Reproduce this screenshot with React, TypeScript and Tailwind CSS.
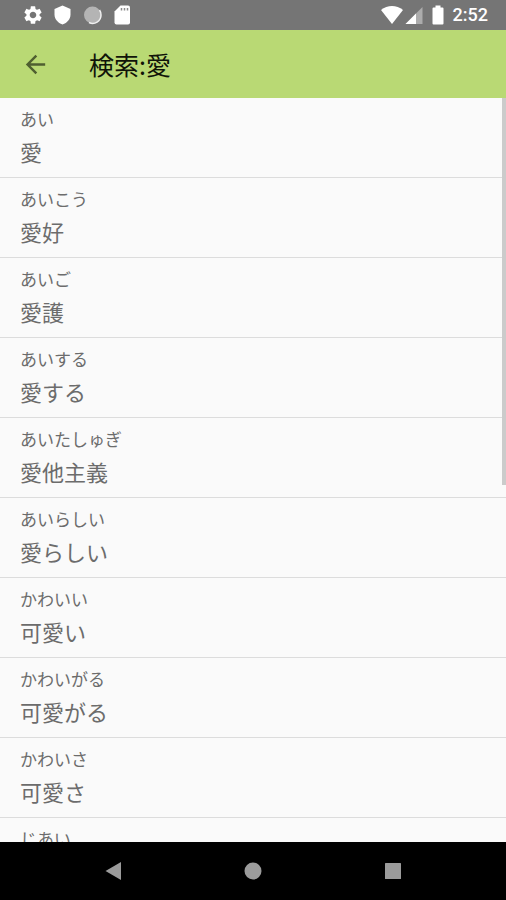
import { MdArrowBack, MdSettings } from "react-icons/md";

interface Word {
  reading: string;
  text: string;
}

const words: Word[] = [
  { reading: "あい", text: "愛" },
  { reading: "あいこう", text: "愛好" },
  { reading: "あいご", text: "愛護" },
  { reading: "あいする", text: "愛する" },
  { reading: "あいたしゅぎ", text: "愛他主義" },
  { reading: "あいらしい", text: "愛らしい" },
  { reading: "かわいい", text: "可愛い" },
  { reading: "かわいがる", text: "可愛がる" },
  { reading: "かわいさ", text: "可愛さ" },
  { reading: "じあい", text: "慈愛" },
];

function StatusBar() {
  return (
    <div className="flex h-[30px] shrink-0 items-center justify-between bg-[#757575] pl-[22px] pr-[18px] text-white">
      <div className="flex items-center gap-2">
        <MdSettings className="size-[22px]" />
        <svg className="size-[22px]" viewBox="0 0 22 22" fill="currentColor">
          <path d="M10.500 1.500 18.500 5v5.500c0 4.400-3.200 8.500-8 10-4.800-1.500-8-5.600-8-10V5z" />
        </svg>
        <svg className="size-[22px]" viewBox="0 0 22 22">
          <circle cx="10.500" cy="11" r="8.500" fill="#b4b4b4" />
          <path
            d="M17.500 6A8.300 8.300 0 0 1 19 11 8.300 8.300 0 0 1 7 18.500"
            fill="none"
            stroke="#f0f0f0"
            strokeWidth="1.500"
          />
        </svg>
        <svg className="size-[22px]" viewBox="0 0 22 22" fill="currentColor">
          <path d="M8.500 1.500H16q2 0 2 2V18.500q0 2-2 2H4.500q-2 0-2-2V7.500z" />
          <path
            d="M9.500 4v2.500M12.500 4v2.500M15.500 4v2.500"
            fill="none"
            stroke="#8c8c8c"
            strokeWidth="1.500"
          />
        </svg>
      </div>
      <div className="flex items-center">
        <svg className="h-[22px] w-6" viewBox="0 0 24 22" fill="currentColor">
          <path d="M1 6C7.500.8 16.500.8 23 6L12 20z" />
        </svg>
        <svg className="h-[22px] w-5" viewBox="0 0 20 22" fill="currentColor">
          <path d="M18.500 3v17h-17z" opacity="0.4" />
          <path d="M12 9.500V20H1.500z" />
        </svg>
        <svg
          className="ml-1 h-[22px] w-[20px]"
          viewBox="0 0 20 22"
          fill="currentColor"
        >
          <path d="M7.500 1.500h5v2H14.500q1 0 1 1v15q0 1-1 1h-9q-1 0-1-1v-15q0-1 1-1h2z" />
        </svg>
        <span className="ml-[5px] font-[Roboto,sans-serif] text-[18px] font-medium leading-[22px]">
          2:52
        </span>
      </div>
    </div>
  );
}

function WordRow({ word }: { word: Word }) {
  return (
    <li className="flex h-20 shrink-0 flex-col border-b border-[#dcdcdc] px-5 pt-[9px] text-[#6c6c6c]">
      <span className="text-[17px] leading-6">{word.reading}</span>
      <span className="mt-1 text-[22px] leading-8">{word.text}</span>
    </li>
  );
}

function NavigationBar() {
  return (
    <nav className="grid h-[58px] shrink-0 grid-cols-3 bg-black px-[43px] text-[#9b9b9b]">
      <button aria-label="Back" className="flex items-center justify-center">
        <svg className="size-5" viewBox="0 0 20 20" fill="currentColor">
          <path d="M18 1v18L2.500 10z" />
        </svg>
      </button>
      <button aria-label="Home" className="flex items-center justify-center">
        <svg className="size-5" viewBox="0 0 20 20" fill="currentColor">
          <circle cx="10" cy="10" r="8.500" />
        </svg>
      </button>
      <button aria-label="Recents" className="flex items-center justify-center">
        <svg className="size-5" viewBox="0 0 20 20" fill="currentColor">
          <rect x="2" y="2" width="16" height="16" rx="0.500" />
        </svg>
      </button>
    </nav>
  );
}

export default function App() {
  return (
    <div
      lang="ja"
      className="flex h-screen flex-col bg-[#fafafa] font-['Noto_Sans_CJK_JP',sans-serif]"
    >
      <StatusBar />
      <header className="flex h-[68px] shrink-0 items-center bg-[#b9d974] pl-[21px]">
        <button aria-label="戻る" className="text-[#4f5f30]">
          <MdArrowBack className="size-[29px]" />
        </button>
        <h1 className="ml-[39px] text-[25px] leading-9 text-[#101408]">
          検索:愛
        </h1>
      </header>
      <main className="relative min-h-0 flex-1 overflow-hidden">
        <ul className="flex flex-col">
          {words.map((word) => (
            <WordRow key={word.reading} word={word} />
          ))}
        </ul>
        {/* scroll thumb */}
        <div className="absolute right-0 top-0 h-[52%] w-1 bg-[#cbcbcb]" />
      </main>
      <NavigationBar />
    </div>
  );
}
